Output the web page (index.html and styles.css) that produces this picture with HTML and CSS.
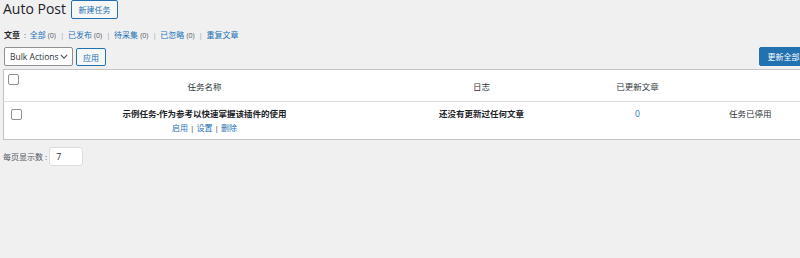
FILE: index.html
```html
<!DOCTYPE html>
<html lang="zh">
<head>
<meta charset="utf-8">
<title>Auto Post</title>
<link rel="stylesheet" href="styles.css">
</head>
<body>
<div class="wrap">
  <div class="head">
    <h1 class="title">Auto Post</h1>
    <a class="title-action" href="#">新建任务</a>
  </div>
  <ul class="subsubsub">
    <li class="label"><b>文章</b> :</li>
    <li><a href="#">全部</a> <span class="count">(0)</span> <span class="sep">|</span></li>
    <li><a href="#">已发布</a> <span class="count">(0)</span> <span class="sep">|</span></li>
    <li><a href="#">待采集</a> <span class="count">(0)</span> <span class="sep">|</span></li>
    <li><a href="#">已忽略</a> <span class="count">(0)</span> <span class="sep">|</span></li>
    <li><a href="#">重复文章</a></li>
  </ul>
  <div class="tablenav">
    <div class="bulk">
      <div class="select">
        <span>Bulk Actions</span>
        <svg class="chev" viewBox="0 0 10 6" width="8" height="5"><path d="M1 1l4 4 4-4" fill="none" stroke="#50575e" stroke-width="1.4"/></svg>
      </div>
      <button class="btn">应用</button>
    </div>
    <button class="btn primary">更新全部</button>
  </div>
  <table class="list">
    <colgroup>
      <col class="c-check"><col class="c-name"><col class="c-log"><col class="c-count"><col class="c-status">
    </colgroup>
    <thead>
      <tr>
        <td class="check-head"><span class="cb"></span></td>
        <th>任务名称</th>
        <th>日志</th>
        <th>已更新文章</th>
        <th></th>
      </tr>
    </thead>
    <tbody>
      <tr>
        <td class="check-row"><span class="cb"></span></td>
        <td class="name">
          <strong>示例任务-作为参考以快速掌握该插件的使用</strong>
          <div class="row-actions"><a href="#">启用</a> | <a href="#">设置</a> | <a href="#">删除</a></div>
        </td>
        <td class="log"><strong>还没有更新过任何文章</strong></td>
        <td class="num"><a href="#">0</a></td>
        <td class="status">任务已停用</td>
      </tr>
    </tbody>
  </table>
  <div class="perpage">
    <label>每页显示数 :</label>
    <span class="input">7</span>
  </div>
</div>
</body>
</html>
```

FILE: styles.css
```css
html, body {
  margin: 0;
  padding: 0;
  background: #f0f0f1;
  overflow: hidden;
}
body {
  font-family: "Open Sans", "Noto Sans CJK SC", sans-serif;
  color: #3c434a;
  font-size: 8.5px;
}
a { color: #2271b1; text-decoration: none; }

.wrap {
  width: 805px;
  margin-left: 3px;
}

.head {
  display: flex;
  align-items: flex-start;
  gap: 5px;
  height: 19px;
}
.title {
  margin: 0;
  font-size: 14px;
  font-weight: 400;
  line-height: 18px;
  color: #1d2327;
}
.title-action {
  display: flex;
  align-items: center;
  justify-content: center;
  height: 17px;
  width: 45px;
  border: 1px solid #2271b1;
  border-radius: 2px;
  background: #f6f7f7;
  font-size: 8px;
}

.subsubsub {
  list-style: none;
  margin: 10px 0 0;
  padding: 0;
  display: flex;
  gap: 3.5px;
  line-height: 12px;
  height: 12px;
  color: #50575e;
  font-size: 8px;
}
.subsubsub .label { margin-left: 1px; }
.subsubsub b { color: #1d2327; margin-right: 2px; }
.subsubsub .count { color: #50575e; font-size: 7px; }
.subsubsub .sep { color: #a7aaad; margin-left: 2px; }

.tablenav {
  margin-top: 6px;
  display: flex;
  justify-content: space-between;
  align-items: flex-start;
  height: 20px;
}
.bulk { display: flex; gap: 3px; align-items: flex-start; }
.select {
  box-sizing: border-box;
  width: 69px;
  height: 19px;
  margin-left: 1px;
  background: #fff;
  border: 1px solid #8c8f94;
  border-radius: 2px;
  display: flex;
  align-items: center;
  justify-content: space-between;
  padding: 0 4px 0 5px;
  color: #2c3338;
  font-size: 8.5px;
}
.btn {
  box-sizing: border-box;
  height: 18px;
  margin-top: 1px;
  padding: 0 6px;
  font-family: inherit;
  font-size: 8px;
  color: #2271b1;
  background: #f6f7f7;
  border: 1px solid #2271b1;
  border-radius: 2px;
  width: 30px;
}
.btn.primary {
  width: 49px;
  height: 19px;
  margin-top: 0;
  background: #2271b1;
  color: #fff;
  border-color: #2271b1;
}

.list {
  margin-top: 2px;
  width: 805px;
  table-layout: fixed;
  border-collapse: collapse;
  background: #fff;
  border: 1px solid #c3c4c7;
}
.c-check { width: 25px; }
.c-name { width: 352px; }
.c-log { width: 202px; }
.c-count { width: 110px; }
.c-status { width: 116px; }

.list thead tr { height: 32px; }
.list th {
  font-weight: 400;
  color: #2c3338;
  text-align: center;
  padding: 0;
  border-bottom: 1px solid #dcdcde;
  font-size: 8.5px;
}
.list thead td { border-bottom: 1px solid #dcdcde; }
.check-head { vertical-align: top; padding: 4px 0 0 4px; }
.cb {
  display: block;
  box-sizing: border-box;
  width: 11px;
  height: 11px;
  border: 1px solid #8c8f94;
  border-radius: 2px;
  background: #fff;
}
.list tbody tr { height: 38px; }
.list tbody td {
  text-align: center;
  vertical-align: top;
  color: #1d2327;
  padding: 5px 0 0;
  line-height: 14px;
}
.list tbody td.check-row { padding: 7px 0 0 7px; }
.name strong, .log strong { font-weight: 700; color: #1d2327; }
.row-actions { color: #3c434a; line-height: 14px; font-size: 8px; }
.list tbody td.status { color: #2c3338; }

.perpage {
  margin-top: 7px;
  display: flex;
  align-items: center;
  gap: 2px;
  color: #50575e;
  font-size: 8px;
}
.perpage .input {
  box-sizing: border-box;
  width: 34px;
  height: 19px;
  background: #fff;
  border: 1px solid #dcdcde;
  border-radius: 3px;
  padding-left: 6px;
  line-height: 17px;
  color: #2c3338;
  font-size: 9px;
}
```
